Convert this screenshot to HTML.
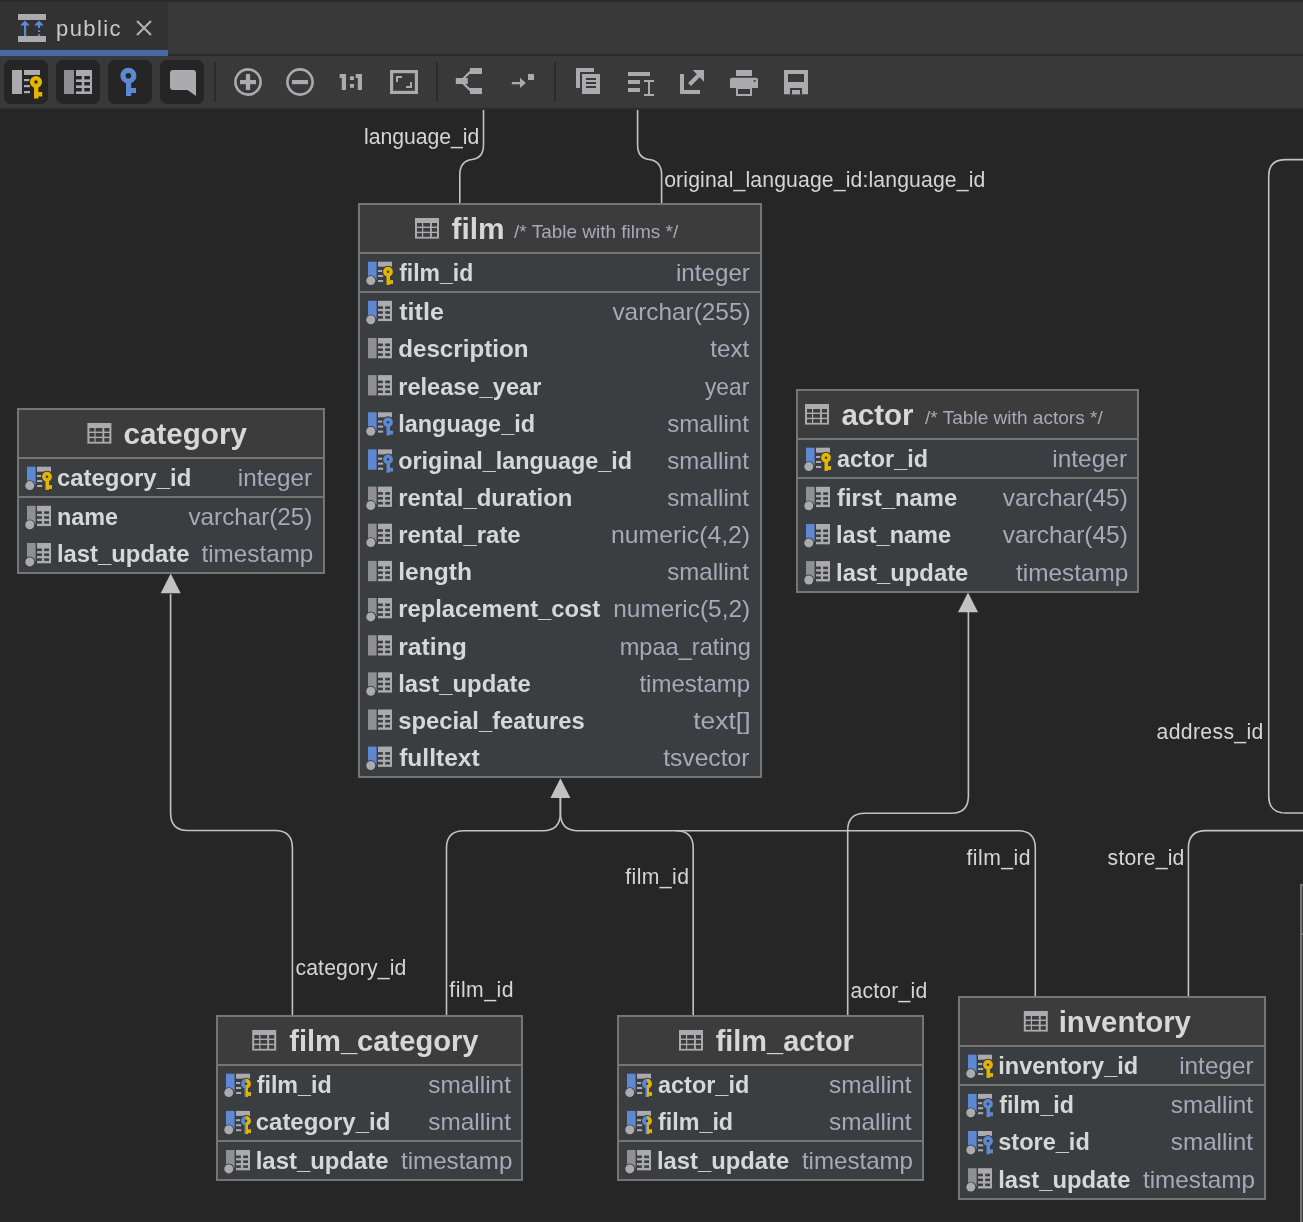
<!DOCTYPE html><html><head><meta charset="utf-8"><title>public - diagram</title><style>html,body{margin:0;padding:0;background:#262626;width:1303px;height:1222px;overflow:hidden}svg{display:block;will-change:transform;font-family:"Liberation Sans",sans-serif}</style></head><body><svg width="1303" height="1222" viewBox="0 0 1303 1222"><rect width="1303" height="1222" fill="#262626"/><g fill="none" stroke="#c2c2c2" stroke-width="1.6"><path d="M483.5,110 V145 Q483.5,158 472,159.5 Q459.8,161 459.8,175 V203"/><path d="M637.6,110 V145 Q637.6,158 649,159.5 Q661.6,161 661.6,175 V203"/><path d="M170.6,594 V813 Q170.6,830.5 188,830.5 H275 Q292.4,830.5 292.4,848 V1015"/><path d="M560.4,797 V813 Q560.4,830.7 543,830.7 H464 Q446.5,830.7 446.5,848 V1015"/><path d="M560.4,797 V813 Q560.4,830.7 578,830.7 H676 Q693.2,830.7 693.2,848 V1015"/><path d="M676,830.7 H1018 Q1035.3,830.7 1035.3,848 V996"/><path d="M968.4,611 V796 Q968.4,813.3 951,813.3 H865 Q847.7,813.3 847.7,830.5 V1015"/><path d="M1303,159.6 H1285.5 Q1268.7,159.6 1268.7,176 V796 Q1268.7,813 1286,813 H1303"/><path d="M1188.4,996 V848 Q1188.4,830.6 1206,830.6 H1303"/></g><path d="M170.7,573.5 L180.7,593.3 H160.7 Z" fill="#c2c2c2"/><path d="M560.4,778.2 L570.4,798.0 H550.4 Z" fill="#c2c2c2"/><path d="M968,592.4 L978,612.1999999999999 H958 Z" fill="#c2c2c2"/><text x="364.0" y="143.8" font-size="21.2" textLength="115.3" lengthAdjust="spacing" fill="#d5d5d5">language_id</text><text x="664.2" y="186.9" font-size="21.2" textLength="321.1" lengthAdjust="spacing" fill="#d5d5d5">original_language_id:language_id</text><text x="1156.6" y="738.9" font-size="21.2" textLength="106.7" lengthAdjust="spacing" fill="#d5d5d5">address_id</text><text x="966.5" y="865.4" font-size="21.2" textLength="64.1" lengthAdjust="spacing" fill="#d5d5d5">film_id</text><text x="1107.6" y="865.4" font-size="21.2" textLength="76.8" lengthAdjust="spacing" fill="#d5d5d5">store_id</text><text x="625.2" y="883.8" font-size="21.2" textLength="63.8" lengthAdjust="spacing" fill="#d5d5d5">film_id</text><text x="295.5" y="975.4" font-size="21.2" textLength="110.8" lengthAdjust="spacing" fill="#d5d5d5">category_id</text><text x="449.3" y="997" font-size="21.2" textLength="64.2" lengthAdjust="spacing" fill="#d5d5d5">film_id</text><text x="850.5" y="998" font-size="21.2" textLength="76.8" lengthAdjust="spacing" fill="#d5d5d5">actor_id</text><rect x="1301" y="885" width="4" height="400" fill="#3c3c3c" stroke="#757575" stroke-width="2"/><rect x="1302" y="933" width="4" height="2" fill="#757575"/><rect x="359" y="204" width="402" height="573.00" fill="#3b3e41" stroke="#757575" stroke-width="2"/><rect x="360" y="205" width="400" height="47" fill="#3c3c3c"/><rect x="360" y="252" width="400" height="2" fill="#757575"/><g transform="translate(415.0,218.0)"><rect x="0" y="0" width="24" height="20.6" fill="#abaaaf"/><rect x="2" y="5" width="5" height="3.6" fill="#3c3c3c"/><rect x="8.2" y="5" width="6.8" height="3.6" fill="#3c3c3c"/><rect x="16.9" y="5" width="5.1" height="3.6" fill="#3c3c3c"/><rect x="2" y="10" width="5" height="3.7" fill="#3c3c3c"/><rect x="8.2" y="10" width="6.8" height="3.7" fill="#3c3c3c"/><rect x="16.9" y="10" width="5.1" height="3.7" fill="#3c3c3c"/><rect x="2" y="15.1" width="5" height="3.7" fill="#3c3c3c"/><rect x="8.2" y="15.1" width="6.8" height="3.7" fill="#3c3c3c"/><rect x="16.9" y="15.1" width="5.1" height="3.7" fill="#3c3c3c"/></g><text x="451.50" y="238.6" font-size="29" font-weight="bold" fill="#d7d7d7" textLength="53.11" lengthAdjust="spacingAndGlyphs">film</text><text x="514.10" y="238.4" font-size="19" fill="#a9a8b9" textLength="164.09" lengthAdjust="spacingAndGlyphs">/* Table with films */</text><rect x="368.0" y="261.7" width="8.6" height="18.0" fill="#5d89d2"/><rect x="378.0" y="261.7" width="14" height="5" fill="#abaaaf"/><rect x="378.0" y="270.0" width="5.2" height="2" fill="#abaaaf"/><rect x="378.0" y="275.0" width="5.2" height="2" fill="#abaaaf"/><rect x="378.0" y="280.0" width="5.2" height="2" fill="#abaaaf"/><g><circle cx="388.0" cy="271.7" r="6" fill="#3b3e41"/><rect x="385.4" y="273.7" width="8" height="12" fill="#3b3e41"/><circle cx="388.0" cy="271.7" r="3.1" fill="none" stroke="#e3b500" stroke-width="3.6"/><rect x="386.5" y="274.7" width="3.5" height="10.2" fill="#e3b500"/><rect x="389.9" y="280.1" width="3.1" height="3.8" fill="#e3b500"/></g><circle cx="370.8" cy="280.6" r="5.4" fill="#3b3e41"/><circle cx="370.8" cy="280.6" r="4.5" fill="#abaaaf"/><text x="399.20" y="281.1" font-size="24.5" font-weight="bold" fill="#d7d7d7" textLength="74.01" lengthAdjust="spacingAndGlyphs">film_id</text><text x="675.99" y="281.1" font-size="24" fill="#a9a8b9" textLength="73.89" lengthAdjust="spacingAndGlyphs">integer</text><rect x="360" y="291" width="400" height="2" fill="#757575"/><rect x="368.0" y="300.8" width="8.6" height="18.0" fill="#5d89d2"/><rect x="378.0" y="300.8" width="14" height="20.3" fill="#abaaaf"/><rect x="378.0" y="306.3" width="4.9" height="2.6" fill="#3b3e41"/><rect x="385.2" y="306.3" width="4.8" height="2.6" fill="#3b3e41"/><rect x="378.0" y="311.2" width="4.9" height="2.6" fill="#3b3e41"/><rect x="385.2" y="311.2" width="4.8" height="2.6" fill="#3b3e41"/><rect x="378.0" y="316.1" width="4.9" height="2.6" fill="#3b3e41"/><rect x="385.2" y="316.1" width="4.8" height="2.6" fill="#3b3e41"/><circle cx="370.8" cy="319.8" r="5.4" fill="#3b3e41"/><circle cx="370.8" cy="319.8" r="4.5" fill="#abaaaf"/><text x="399.20" y="320.2" font-size="24.5" font-weight="bold" fill="#d7d7d7" textLength="44.68" lengthAdjust="spacingAndGlyphs">title</text><text x="612.40" y="320.2" font-size="24" fill="#a9a8b9" textLength="138.18" lengthAdjust="spacingAndGlyphs">varchar(255)</text><rect x="360" y="329.80" width="400" height="1" fill="#3d3d3e"/><rect x="368.0" y="338.0" width="8.6" height="20.3" fill="#8f8f94"/><rect x="378.0" y="338.0" width="14" height="20.3" fill="#abaaaf"/><rect x="378.0" y="343.5" width="4.9" height="2.6" fill="#3b3e41"/><rect x="385.2" y="343.5" width="4.8" height="2.6" fill="#3b3e41"/><rect x="378.0" y="348.4" width="4.9" height="2.6" fill="#3b3e41"/><rect x="385.2" y="348.4" width="4.8" height="2.6" fill="#3b3e41"/><rect x="378.0" y="353.3" width="4.9" height="2.6" fill="#3b3e41"/><rect x="385.2" y="353.3" width="4.8" height="2.6" fill="#3b3e41"/><text x="398.21" y="357.4" font-size="24.5" font-weight="bold" fill="#d7d7d7" textLength="130.22" lengthAdjust="spacingAndGlyphs">description</text><text x="710.30" y="357.4" font-size="24" fill="#a9a8b9" textLength="38.89" lengthAdjust="spacingAndGlyphs">text</text><rect x="360" y="366.95" width="400" height="1" fill="#3d3d3e"/><rect x="368.0" y="375.1" width="8.6" height="20.3" fill="#8f8f94"/><rect x="378.0" y="375.1" width="14" height="20.3" fill="#abaaaf"/><rect x="378.0" y="380.6" width="4.9" height="2.6" fill="#3b3e41"/><rect x="385.2" y="380.6" width="4.8" height="2.6" fill="#3b3e41"/><rect x="378.0" y="385.5" width="4.9" height="2.6" fill="#3b3e41"/><rect x="385.2" y="385.5" width="4.8" height="2.6" fill="#3b3e41"/><rect x="378.0" y="390.4" width="4.9" height="2.6" fill="#3b3e41"/><rect x="385.2" y="390.4" width="4.8" height="2.6" fill="#3b3e41"/><text x="398.24" y="394.5" font-size="24.5" font-weight="bold" fill="#d7d7d7" textLength="143.10" lengthAdjust="spacingAndGlyphs">release_year</text><text x="705.00" y="394.5" font-size="24" fill="#a9a8b9" textLength="44.20" lengthAdjust="spacingAndGlyphs">year</text><rect x="360" y="404.10" width="400" height="1" fill="#3d3d3e"/><rect x="368.0" y="412.3" width="8.6" height="18.0" fill="#5d89d2"/><rect x="378.0" y="412.3" width="14" height="5" fill="#abaaaf"/><rect x="378.0" y="420.6" width="5.2" height="2" fill="#abaaaf"/><rect x="378.0" y="425.6" width="5.2" height="2" fill="#abaaaf"/><rect x="378.0" y="430.6" width="5.2" height="2" fill="#abaaaf"/><g><circle cx="388.0" cy="422.3" r="6" fill="#3b3e41"/><rect x="385.4" y="424.3" width="8" height="12" fill="#3b3e41"/><circle cx="388.0" cy="422.3" r="3.1" fill="none" stroke="#5d89d2" stroke-width="3.6"/><rect x="386.5" y="425.3" width="3.5" height="10.2" fill="#5d89d2"/><rect x="389.9" y="430.7" width="3.1" height="3.8" fill="#5d89d2"/></g><circle cx="370.8" cy="431.2" r="5.4" fill="#3b3e41"/><circle cx="370.8" cy="431.2" r="4.5" fill="#abaaaf"/><text x="398.24" y="431.7" font-size="24.5" font-weight="bold" fill="#d7d7d7" textLength="136.77" lengthAdjust="spacingAndGlyphs">language_id</text><text x="667.30" y="431.7" font-size="24" fill="#a9a8b9" textLength="81.56" lengthAdjust="spacingAndGlyphs">smallint</text><rect x="360" y="441.25" width="400" height="1" fill="#3d3d3e"/><rect x="368.0" y="449.4" width="8.6" height="20.3" fill="#5d89d2"/><rect x="378.0" y="449.4" width="14" height="5" fill="#abaaaf"/><rect x="378.0" y="457.7" width="5.2" height="2" fill="#abaaaf"/><rect x="378.0" y="462.7" width="5.2" height="2" fill="#abaaaf"/><rect x="378.0" y="467.7" width="5.2" height="2" fill="#abaaaf"/><g><circle cx="388.0" cy="459.4" r="6" fill="#3b3e41"/><rect x="385.4" y="461.4" width="8" height="12" fill="#3b3e41"/><circle cx="388.0" cy="459.4" r="3.1" fill="none" stroke="#5d89d2" stroke-width="3.6"/><rect x="386.5" y="462.4" width="3.5" height="10.2" fill="#5d89d2"/><rect x="389.9" y="467.8" width="3.1" height="3.8" fill="#5d89d2"/></g><text x="398.25" y="468.8" font-size="24.5" font-weight="bold" fill="#d7d7d7" textLength="233.77" lengthAdjust="spacingAndGlyphs">original_language_id</text><text x="667.30" y="468.8" font-size="24" fill="#a9a8b9" textLength="81.56" lengthAdjust="spacingAndGlyphs">smallint</text><rect x="360" y="478.40" width="400" height="1" fill="#3d3d3e"/><rect x="368.0" y="486.6" width="8.6" height="18.0" fill="#8f8f94"/><rect x="378.0" y="486.6" width="14" height="20.3" fill="#abaaaf"/><rect x="378.0" y="492.1" width="4.9" height="2.6" fill="#3b3e41"/><rect x="385.2" y="492.1" width="4.8" height="2.6" fill="#3b3e41"/><rect x="378.0" y="497.0" width="4.9" height="2.6" fill="#3b3e41"/><rect x="385.2" y="497.0" width="4.8" height="2.6" fill="#3b3e41"/><rect x="378.0" y="501.9" width="4.9" height="2.6" fill="#3b3e41"/><rect x="385.2" y="501.9" width="4.8" height="2.6" fill="#3b3e41"/><circle cx="370.8" cy="505.5" r="5.4" fill="#3b3e41"/><circle cx="370.8" cy="505.5" r="4.5" fill="#abaaaf"/><text x="398.22" y="506.0" font-size="24.5" font-weight="bold" fill="#d7d7d7" textLength="174.19" lengthAdjust="spacingAndGlyphs">rental_duration</text><text x="667.30" y="506.0" font-size="24" fill="#a9a8b9" textLength="81.56" lengthAdjust="spacingAndGlyphs">smallint</text><rect x="360" y="515.55" width="400" height="1" fill="#3d3d3e"/><rect x="368.0" y="523.7" width="8.6" height="18.0" fill="#8f8f94"/><rect x="378.0" y="523.7" width="14" height="20.3" fill="#abaaaf"/><rect x="378.0" y="529.2" width="4.9" height="2.6" fill="#3b3e41"/><rect x="385.2" y="529.2" width="4.8" height="2.6" fill="#3b3e41"/><rect x="378.0" y="534.1" width="4.9" height="2.6" fill="#3b3e41"/><rect x="385.2" y="534.1" width="4.8" height="2.6" fill="#3b3e41"/><rect x="378.0" y="539.0" width="4.9" height="2.6" fill="#3b3e41"/><rect x="385.2" y="539.0" width="4.8" height="2.6" fill="#3b3e41"/><circle cx="370.8" cy="542.6" r="5.4" fill="#3b3e41"/><circle cx="370.8" cy="542.6" r="4.5" fill="#abaaaf"/><text x="398.22" y="543.1" font-size="24.5" font-weight="bold" fill="#d7d7d7" textLength="122.47" lengthAdjust="spacingAndGlyphs">rental_rate</text><text x="611.07" y="543.1" font-size="24" fill="#a9a8b9" textLength="139.07" lengthAdjust="spacingAndGlyphs">numeric(4,2)</text><rect x="360" y="552.70" width="400" height="1" fill="#3d3d3e"/><rect x="368.0" y="560.9" width="8.6" height="20.3" fill="#8f8f94"/><rect x="378.0" y="560.9" width="14" height="20.3" fill="#abaaaf"/><rect x="378.0" y="566.4" width="4.9" height="2.6" fill="#3b3e41"/><rect x="385.2" y="566.4" width="4.8" height="2.6" fill="#3b3e41"/><rect x="378.0" y="571.3" width="4.9" height="2.6" fill="#3b3e41"/><rect x="385.2" y="571.3" width="4.8" height="2.6" fill="#3b3e41"/><rect x="378.0" y="576.2" width="4.9" height="2.6" fill="#3b3e41"/><rect x="385.2" y="576.2" width="4.8" height="2.6" fill="#3b3e41"/><text x="398.20" y="580.3" font-size="24.5" font-weight="bold" fill="#d7d7d7" textLength="73.81" lengthAdjust="spacingAndGlyphs">length</text><text x="667.30" y="580.3" font-size="24" fill="#a9a8b9" textLength="81.56" lengthAdjust="spacingAndGlyphs">smallint</text><rect x="360" y="589.85" width="400" height="1" fill="#3d3d3e"/><rect x="368.0" y="598.0" width="8.6" height="18.0" fill="#8f8f94"/><rect x="378.0" y="598.0" width="14" height="20.3" fill="#abaaaf"/><rect x="378.0" y="603.5" width="4.9" height="2.6" fill="#3b3e41"/><rect x="385.2" y="603.5" width="4.8" height="2.6" fill="#3b3e41"/><rect x="378.0" y="608.4" width="4.9" height="2.6" fill="#3b3e41"/><rect x="385.2" y="608.4" width="4.8" height="2.6" fill="#3b3e41"/><rect x="378.0" y="613.3" width="4.9" height="2.6" fill="#3b3e41"/><rect x="385.2" y="613.3" width="4.8" height="2.6" fill="#3b3e41"/><circle cx="370.8" cy="616.9" r="5.4" fill="#3b3e41"/><circle cx="370.8" cy="616.9" r="4.5" fill="#abaaaf"/><text x="398.23" y="617.4" font-size="24.5" font-weight="bold" fill="#d7d7d7" textLength="201.95" lengthAdjust="spacingAndGlyphs">replacement_cost</text><text x="613.28" y="617.4" font-size="24" fill="#a9a8b9" textLength="136.85" lengthAdjust="spacingAndGlyphs">numeric(5,2)</text><rect x="360" y="627.00" width="400" height="1" fill="#3d3d3e"/><rect x="368.0" y="635.2" width="8.6" height="20.3" fill="#8f8f94"/><rect x="378.0" y="635.2" width="14" height="20.3" fill="#abaaaf"/><rect x="378.0" y="640.7" width="4.9" height="2.6" fill="#3b3e41"/><rect x="385.2" y="640.7" width="4.8" height="2.6" fill="#3b3e41"/><rect x="378.0" y="645.6" width="4.9" height="2.6" fill="#3b3e41"/><rect x="385.2" y="645.6" width="4.8" height="2.6" fill="#3b3e41"/><rect x="378.0" y="650.5" width="4.9" height="2.6" fill="#3b3e41"/><rect x="385.2" y="650.5" width="4.8" height="2.6" fill="#3b3e41"/><text x="398.19" y="654.6" font-size="24.5" font-weight="bold" fill="#d7d7d7" textLength="68.68" lengthAdjust="spacingAndGlyphs">rating</text><text x="619.72" y="654.6" font-size="24" fill="#a9a8b9" textLength="131.08" lengthAdjust="spacingAndGlyphs">mpaa_rating</text><rect x="360" y="664.15" width="400" height="1" fill="#3d3d3e"/><rect x="368.0" y="672.3" width="8.6" height="18.0" fill="#8f8f94"/><rect x="378.0" y="672.3" width="14" height="20.3" fill="#abaaaf"/><rect x="378.0" y="677.8" width="4.9" height="2.6" fill="#3b3e41"/><rect x="385.2" y="677.8" width="4.8" height="2.6" fill="#3b3e41"/><rect x="378.0" y="682.7" width="4.9" height="2.6" fill="#3b3e41"/><rect x="385.2" y="682.7" width="4.8" height="2.6" fill="#3b3e41"/><rect x="378.0" y="687.6" width="4.9" height="2.6" fill="#3b3e41"/><rect x="385.2" y="687.6" width="4.8" height="2.6" fill="#3b3e41"/><circle cx="370.8" cy="691.2" r="5.4" fill="#3b3e41"/><circle cx="370.8" cy="691.2" r="4.5" fill="#abaaaf"/><text x="398.23" y="691.7" font-size="24.5" font-weight="bold" fill="#d7d7d7" textLength="132.42" lengthAdjust="spacingAndGlyphs">last_update</text><text x="639.40" y="691.7" font-size="24" fill="#a9a8b9" textLength="110.70" lengthAdjust="spacingAndGlyphs">timestamp</text><rect x="360" y="701.30" width="400" height="1" fill="#3d3d3e"/><rect x="368.0" y="709.5" width="8.6" height="20.3" fill="#8f8f94"/><rect x="378.0" y="709.5" width="14" height="20.3" fill="#abaaaf"/><rect x="378.0" y="715.0" width="4.9" height="2.6" fill="#3b3e41"/><rect x="385.2" y="715.0" width="4.8" height="2.6" fill="#3b3e41"/><rect x="378.0" y="719.9" width="4.9" height="2.6" fill="#3b3e41"/><rect x="385.2" y="719.9" width="4.8" height="2.6" fill="#3b3e41"/><rect x="378.0" y="724.8" width="4.9" height="2.6" fill="#3b3e41"/><rect x="385.2" y="724.8" width="4.8" height="2.6" fill="#3b3e41"/><text x="398.23" y="728.9" font-size="24.5" font-weight="bold" fill="#d7d7d7" textLength="186.60" lengthAdjust="spacingAndGlyphs">special_features</text><text x="693.20" y="728.9" font-size="24" fill="#a9a8b9" textLength="57.34" lengthAdjust="spacingAndGlyphs">text[]</text><rect x="360" y="738.45" width="400" height="1" fill="#3d3d3e"/><rect x="368.0" y="746.6" width="8.6" height="18.0" fill="#5d89d2"/><rect x="378.0" y="746.6" width="14" height="20.3" fill="#abaaaf"/><rect x="378.0" y="752.1" width="4.9" height="2.6" fill="#3b3e41"/><rect x="385.2" y="752.1" width="4.8" height="2.6" fill="#3b3e41"/><rect x="378.0" y="757.0" width="4.9" height="2.6" fill="#3b3e41"/><rect x="385.2" y="757.0" width="4.8" height="2.6" fill="#3b3e41"/><rect x="378.0" y="761.9" width="4.9" height="2.6" fill="#3b3e41"/><rect x="385.2" y="761.9" width="4.8" height="2.6" fill="#3b3e41"/><circle cx="370.8" cy="765.5" r="5.4" fill="#3b3e41"/><circle cx="370.8" cy="765.5" r="4.5" fill="#abaaaf"/><text x="399.20" y="766.0" font-size="24.5" font-weight="bold" fill="#d7d7d7" textLength="80.41" lengthAdjust="spacingAndGlyphs">fulltext</text><text x="663.20" y="766.0" font-size="24" fill="#a9a8b9" textLength="86.23" lengthAdjust="spacingAndGlyphs">tsvector</text><rect x="18" y="409" width="306" height="164.00" fill="#3b3e41" stroke="#757575" stroke-width="2"/><rect x="19" y="410" width="304" height="47" fill="#3c3c3c"/><rect x="19" y="457" width="304" height="2" fill="#757575"/><g transform="translate(87.4,423.0)"><rect x="0" y="0" width="24" height="20.6" fill="#abaaaf"/><rect x="2" y="5" width="5" height="3.6" fill="#3c3c3c"/><rect x="8.2" y="5" width="6.8" height="3.6" fill="#3c3c3c"/><rect x="16.9" y="5" width="5.1" height="3.6" fill="#3c3c3c"/><rect x="2" y="10" width="5" height="3.7" fill="#3c3c3c"/><rect x="8.2" y="10" width="6.8" height="3.7" fill="#3c3c3c"/><rect x="16.9" y="10" width="5.1" height="3.7" fill="#3c3c3c"/><rect x="2" y="15.1" width="5" height="3.7" fill="#3c3c3c"/><rect x="8.2" y="15.1" width="6.8" height="3.7" fill="#3c3c3c"/><rect x="16.9" y="15.1" width="5.1" height="3.7" fill="#3c3c3c"/></g><text x="123.48" y="443.6" font-size="29" font-weight="bold" fill="#d7d7d7" textLength="123.41" lengthAdjust="spacingAndGlyphs">category</text><rect x="27.0" y="466.7" width="8.6" height="18.0" fill="#5d89d2"/><rect x="37.0" y="466.7" width="14" height="5" fill="#abaaaf"/><rect x="37.0" y="475.0" width="5.2" height="2" fill="#abaaaf"/><rect x="37.0" y="480.0" width="5.2" height="2" fill="#abaaaf"/><rect x="37.0" y="485.0" width="5.2" height="2" fill="#abaaaf"/><g><circle cx="47.0" cy="476.7" r="6" fill="#3b3e41"/><rect x="44.4" y="478.7" width="8" height="12" fill="#3b3e41"/><circle cx="47.0" cy="476.7" r="3.1" fill="none" stroke="#e3b500" stroke-width="3.6"/><rect x="45.5" y="479.7" width="3.5" height="10.2" fill="#e3b500"/><rect x="48.9" y="485.1" width="3.1" height="3.8" fill="#e3b500"/></g><circle cx="29.8" cy="485.6" r="5.4" fill="#3b3e41"/><circle cx="29.8" cy="485.6" r="4.5" fill="#abaaaf"/><text x="56.92" y="486.1" font-size="24.5" font-weight="bold" fill="#d7d7d7" textLength="134.37" lengthAdjust="spacingAndGlyphs">category_id</text><text x="237.89" y="486.1" font-size="24" fill="#a9a8b9" textLength="74.09" lengthAdjust="spacingAndGlyphs">integer</text><rect x="19" y="496" width="304" height="2" fill="#757575"/><rect x="27.0" y="505.8" width="8.6" height="18.0" fill="#8f8f94"/><rect x="37.0" y="505.8" width="14" height="20.3" fill="#abaaaf"/><rect x="37.0" y="511.3" width="4.9" height="2.6" fill="#3b3e41"/><rect x="44.2" y="511.3" width="4.8" height="2.6" fill="#3b3e41"/><rect x="37.0" y="516.2" width="4.9" height="2.6" fill="#3b3e41"/><rect x="44.2" y="516.2" width="4.8" height="2.6" fill="#3b3e41"/><rect x="37.0" y="521.1" width="4.9" height="2.6" fill="#3b3e41"/><rect x="44.2" y="521.1" width="4.8" height="2.6" fill="#3b3e41"/><circle cx="29.8" cy="524.8" r="5.4" fill="#3b3e41"/><circle cx="29.8" cy="524.8" r="4.5" fill="#abaaaf"/><text x="56.95" y="525.2" font-size="24.5" font-weight="bold" fill="#d7d7d7" textLength="61.07" lengthAdjust="spacingAndGlyphs">name</text><text x="188.50" y="525.2" font-size="24" fill="#a9a8b9" textLength="123.83" lengthAdjust="spacingAndGlyphs">varchar(25)</text><rect x="19" y="534.80" width="304" height="1" fill="#3d3d3e"/><rect x="27.0" y="543.0" width="8.6" height="18.0" fill="#8f8f94"/><rect x="37.0" y="543.0" width="14" height="20.3" fill="#abaaaf"/><rect x="37.0" y="548.5" width="4.9" height="2.6" fill="#3b3e41"/><rect x="44.2" y="548.5" width="4.8" height="2.6" fill="#3b3e41"/><rect x="37.0" y="553.4" width="4.9" height="2.6" fill="#3b3e41"/><rect x="44.2" y="553.4" width="4.8" height="2.6" fill="#3b3e41"/><rect x="37.0" y="558.3" width="4.9" height="2.6" fill="#3b3e41"/><rect x="44.2" y="558.3" width="4.8" height="2.6" fill="#3b3e41"/><circle cx="29.8" cy="561.9" r="5.4" fill="#3b3e41"/><circle cx="29.8" cy="561.9" r="4.5" fill="#abaaaf"/><text x="56.93" y="562.4" font-size="24.5" font-weight="bold" fill="#d7d7d7" textLength="132.53" lengthAdjust="spacingAndGlyphs">last_update</text><text x="201.50" y="562.4" font-size="24" fill="#a9a8b9" textLength="111.81" lengthAdjust="spacingAndGlyphs">timestamp</text><rect x="797" y="390" width="341" height="202.00" fill="#3b3e41" stroke="#757575" stroke-width="2"/><rect x="798" y="391" width="339" height="47" fill="#3c3c3c"/><rect x="798" y="438" width="339" height="2" fill="#757575"/><g transform="translate(805.0,404.0)"><rect x="0" y="0" width="24" height="20.6" fill="#abaaaf"/><rect x="2" y="5" width="5" height="3.6" fill="#3c3c3c"/><rect x="8.2" y="5" width="6.8" height="3.6" fill="#3c3c3c"/><rect x="16.9" y="5" width="5.1" height="3.6" fill="#3c3c3c"/><rect x="2" y="10" width="5" height="3.7" fill="#3c3c3c"/><rect x="8.2" y="10" width="6.8" height="3.7" fill="#3c3c3c"/><rect x="16.9" y="10" width="5.1" height="3.7" fill="#3c3c3c"/><rect x="2" y="15.1" width="5" height="3.7" fill="#3c3c3c"/><rect x="8.2" y="15.1" width="6.8" height="3.7" fill="#3c3c3c"/><rect x="16.9" y="15.1" width="5.1" height="3.7" fill="#3c3c3c"/></g><text x="841.48" y="424.6" font-size="29" font-weight="bold" fill="#d7d7d7" textLength="72.14" lengthAdjust="spacingAndGlyphs">actor</text><text x="925.00" y="424.4" font-size="19" fill="#a9a8b9" textLength="177.78" lengthAdjust="spacingAndGlyphs">/* Table with actors */</text><rect x="806.0" y="447.7" width="8.6" height="18.0" fill="#5d89d2"/><rect x="816.0" y="447.7" width="14" height="5" fill="#abaaaf"/><rect x="816.0" y="456.0" width="5.2" height="2" fill="#abaaaf"/><rect x="816.0" y="461.0" width="5.2" height="2" fill="#abaaaf"/><rect x="816.0" y="466.0" width="5.2" height="2" fill="#abaaaf"/><g><circle cx="826.0" cy="457.7" r="6" fill="#3b3e41"/><rect x="823.4" y="459.7" width="8" height="12" fill="#3b3e41"/><circle cx="826.0" cy="457.7" r="3.1" fill="none" stroke="#e3b500" stroke-width="3.6"/><rect x="824.5" y="460.7" width="3.5" height="10.2" fill="#e3b500"/><rect x="827.9" y="466.1" width="3.1" height="3.8" fill="#e3b500"/></g><circle cx="808.8" cy="466.6" r="5.4" fill="#3b3e41"/><circle cx="808.8" cy="466.6" r="4.5" fill="#abaaaf"/><text x="837.00" y="467.1" font-size="24.5" font-weight="bold" fill="#d7d7d7" textLength="91.05" lengthAdjust="spacingAndGlyphs">actor_id</text><text x="1052.28" y="467.1" font-size="24" fill="#a9a8b9" textLength="74.80" lengthAdjust="spacingAndGlyphs">integer</text><rect x="798" y="477" width="339" height="2" fill="#757575"/><rect x="806.0" y="486.8" width="8.6" height="18.0" fill="#8f8f94"/><rect x="816.0" y="486.8" width="14" height="20.3" fill="#abaaaf"/><rect x="816.0" y="492.3" width="4.9" height="2.6" fill="#3b3e41"/><rect x="823.2" y="492.3" width="4.8" height="2.6" fill="#3b3e41"/><rect x="816.0" y="497.2" width="4.9" height="2.6" fill="#3b3e41"/><rect x="823.2" y="497.2" width="4.8" height="2.6" fill="#3b3e41"/><rect x="816.0" y="502.1" width="4.9" height="2.6" fill="#3b3e41"/><rect x="823.2" y="502.1" width="4.8" height="2.6" fill="#3b3e41"/><circle cx="808.8" cy="505.8" r="5.4" fill="#3b3e41"/><circle cx="808.8" cy="505.8" r="4.5" fill="#abaaaf"/><text x="837.00" y="506.2" font-size="24.5" font-weight="bold" fill="#d7d7d7" textLength="120.19" lengthAdjust="spacingAndGlyphs">first_name</text><text x="1002.80" y="506.2" font-size="24" fill="#a9a8b9" textLength="125.03" lengthAdjust="spacingAndGlyphs">varchar(45)</text><rect x="798" y="515.80" width="339" height="1" fill="#3d3d3e"/><rect x="806.0" y="524.0" width="8.6" height="18.0" fill="#5d89d2"/><rect x="816.0" y="524.0" width="14" height="20.3" fill="#abaaaf"/><rect x="816.0" y="529.5" width="4.9" height="2.6" fill="#3b3e41"/><rect x="823.2" y="529.5" width="4.8" height="2.6" fill="#3b3e41"/><rect x="816.0" y="534.4" width="4.9" height="2.6" fill="#3b3e41"/><rect x="823.2" y="534.4" width="4.8" height="2.6" fill="#3b3e41"/><rect x="816.0" y="539.3" width="4.9" height="2.6" fill="#3b3e41"/><rect x="823.2" y="539.3" width="4.8" height="2.6" fill="#3b3e41"/><circle cx="808.8" cy="542.9" r="5.4" fill="#3b3e41"/><circle cx="808.8" cy="542.9" r="4.5" fill="#abaaaf"/><text x="836.04" y="543.4" font-size="24.5" font-weight="bold" fill="#d7d7d7" textLength="115.09" lengthAdjust="spacingAndGlyphs">last_name</text><text x="1002.80" y="543.4" font-size="24" fill="#a9a8b9" textLength="125.03" lengthAdjust="spacingAndGlyphs">varchar(45)</text><rect x="798" y="552.95" width="339" height="1" fill="#3d3d3e"/><rect x="806.0" y="561.1" width="8.6" height="18.0" fill="#8f8f94"/><rect x="816.0" y="561.1" width="14" height="20.3" fill="#abaaaf"/><rect x="816.0" y="566.6" width="4.9" height="2.6" fill="#3b3e41"/><rect x="823.2" y="566.6" width="4.8" height="2.6" fill="#3b3e41"/><rect x="816.0" y="571.5" width="4.9" height="2.6" fill="#3b3e41"/><rect x="823.2" y="571.5" width="4.8" height="2.6" fill="#3b3e41"/><rect x="816.0" y="576.4" width="4.9" height="2.6" fill="#3b3e41"/><rect x="823.2" y="576.4" width="4.8" height="2.6" fill="#3b3e41"/><circle cx="808.8" cy="580.0" r="5.4" fill="#3b3e41"/><circle cx="808.8" cy="580.0" r="4.5" fill="#abaaaf"/><text x="836.03" y="580.5" font-size="24.5" font-weight="bold" fill="#d7d7d7" textLength="132.32" lengthAdjust="spacingAndGlyphs">last_update</text><text x="1016.00" y="580.5" font-size="24" fill="#a9a8b9" textLength="112.41" lengthAdjust="spacingAndGlyphs">timestamp</text><rect x="217" y="1016" width="305" height="164.00" fill="#3b3e41" stroke="#757575" stroke-width="2"/><rect x="218" y="1017" width="303" height="47" fill="#3c3c3c"/><rect x="218" y="1064" width="303" height="2" fill="#757575"/><g transform="translate(252.2,1030.0)"><rect x="0" y="0" width="24" height="20.6" fill="#abaaaf"/><rect x="2" y="5" width="5" height="3.6" fill="#3c3c3c"/><rect x="8.2" y="5" width="6.8" height="3.6" fill="#3c3c3c"/><rect x="16.9" y="5" width="5.1" height="3.6" fill="#3c3c3c"/><rect x="2" y="10" width="5" height="3.7" fill="#3c3c3c"/><rect x="8.2" y="10" width="6.8" height="3.7" fill="#3c3c3c"/><rect x="16.9" y="10" width="5.1" height="3.7" fill="#3c3c3c"/><rect x="2" y="15.1" width="5" height="3.7" fill="#3c3c3c"/><rect x="8.2" y="15.1" width="6.8" height="3.7" fill="#3c3c3c"/><rect x="16.9" y="15.1" width="5.1" height="3.7" fill="#3c3c3c"/></g><text x="289.20" y="1050.6" font-size="29" font-weight="bold" fill="#d7d7d7" textLength="189.28" lengthAdjust="spacingAndGlyphs">film_category</text><rect x="226.0" y="1073.7" width="8.6" height="18.0" fill="#5d89d2"/><rect x="236.0" y="1073.7" width="14" height="5" fill="#abaaaf"/><rect x="236.0" y="1082.0" width="5.2" height="2" fill="#abaaaf"/><rect x="236.0" y="1087.0" width="5.2" height="2" fill="#abaaaf"/><rect x="236.0" y="1092.0" width="5.2" height="2" fill="#abaaaf"/><g><clipPath id="cl216_1066"><rect x="238" y="1075.7" width="8" height="24"/></clipPath><clipPath id="cr216_1066"><rect x="246" y="1075.7" width="8" height="24"/></clipPath></g><g clip-path="url(#cl216_1066)"><circle cx="246.0" cy="1083.7" r="6" fill="#3b3e41"/><rect x="243.4" y="1085.7" width="8" height="12" fill="#3b3e41"/><circle cx="246.0" cy="1083.7" r="3.1" fill="none" stroke="#5d89d2" stroke-width="3.6"/><rect x="244.5" y="1086.7" width="3.5" height="10.2" fill="#5d89d2"/><rect x="247.9" y="1092.1" width="3.1" height="3.8" fill="#5d89d2"/></g><g clip-path="url(#cr216_1066)"><circle cx="246.0" cy="1083.7" r="6" fill="#3b3e41"/><rect x="243.4" y="1085.7" width="8" height="12" fill="#3b3e41"/><circle cx="246.0" cy="1083.7" r="3.1" fill="none" stroke="#e3b500" stroke-width="3.6"/><rect x="244.5" y="1086.7" width="3.5" height="10.2" fill="#e3b500"/><rect x="247.9" y="1092.1" width="3.1" height="3.8" fill="#e3b500"/></g><circle cx="228.8" cy="1092.6" r="5.4" fill="#3b3e41"/><circle cx="228.8" cy="1092.6" r="4.5" fill="#abaaaf"/><text x="256.70" y="1093.1" font-size="24.5" font-weight="bold" fill="#d7d7d7" textLength="75.02" lengthAdjust="spacingAndGlyphs">film_id</text><text x="428.28" y="1093.1" font-size="24" fill="#a9a8b9" textLength="82.67" lengthAdjust="spacingAndGlyphs">smallint</text><rect x="218" y="1102.65" width="303" height="1" fill="#3d3d3e"/><rect x="226.0" y="1110.9" width="8.6" height="18.0" fill="#5d89d2"/><rect x="236.0" y="1110.9" width="14" height="5" fill="#abaaaf"/><rect x="236.0" y="1119.2" width="5.2" height="2" fill="#abaaaf"/><rect x="236.0" y="1124.2" width="5.2" height="2" fill="#abaaaf"/><rect x="236.0" y="1129.2" width="5.2" height="2" fill="#abaaaf"/><g><clipPath id="cl216_1103"><rect x="238" y="1112.8500000000001" width="8" height="24"/></clipPath><clipPath id="cr216_1103"><rect x="246" y="1112.8500000000001" width="8" height="24"/></clipPath></g><g clip-path="url(#cl216_1103)"><circle cx="246.0" cy="1120.9" r="6" fill="#3b3e41"/><rect x="243.4" y="1122.9" width="8" height="12" fill="#3b3e41"/><circle cx="246.0" cy="1120.9" r="3.1" fill="none" stroke="#5d89d2" stroke-width="3.6"/><rect x="244.5" y="1123.9" width="3.5" height="10.2" fill="#5d89d2"/><rect x="247.9" y="1129.3" width="3.1" height="3.8" fill="#5d89d2"/></g><g clip-path="url(#cr216_1103)"><circle cx="246.0" cy="1120.9" r="6" fill="#3b3e41"/><rect x="243.4" y="1122.9" width="8" height="12" fill="#3b3e41"/><circle cx="246.0" cy="1120.9" r="3.1" fill="none" stroke="#e3b500" stroke-width="3.6"/><rect x="244.5" y="1123.9" width="3.5" height="10.2" fill="#e3b500"/><rect x="247.9" y="1129.3" width="3.1" height="3.8" fill="#e3b500"/></g><circle cx="228.8" cy="1129.8" r="5.4" fill="#3b3e41"/><circle cx="228.8" cy="1129.8" r="4.5" fill="#abaaaf"/><text x="255.72" y="1130.2" font-size="24.5" font-weight="bold" fill="#d7d7d7" textLength="134.58" lengthAdjust="spacingAndGlyphs">category_id</text><text x="428.28" y="1130.2" font-size="24" fill="#a9a8b9" textLength="82.67" lengthAdjust="spacingAndGlyphs">smallint</text><rect x="218" y="1140" width="303" height="2" fill="#757575"/><rect x="226.0" y="1150.0" width="8.6" height="18.0" fill="#8f8f94"/><rect x="236.0" y="1150.0" width="14" height="20.3" fill="#abaaaf"/><rect x="236.0" y="1155.5" width="4.9" height="2.6" fill="#3b3e41"/><rect x="243.2" y="1155.5" width="4.8" height="2.6" fill="#3b3e41"/><rect x="236.0" y="1160.4" width="4.9" height="2.6" fill="#3b3e41"/><rect x="243.2" y="1160.4" width="4.8" height="2.6" fill="#3b3e41"/><rect x="236.0" y="1165.3" width="4.9" height="2.6" fill="#3b3e41"/><rect x="243.2" y="1165.3" width="4.8" height="2.6" fill="#3b3e41"/><circle cx="228.8" cy="1168.9" r="5.4" fill="#3b3e41"/><circle cx="228.8" cy="1168.9" r="4.5" fill="#abaaaf"/><text x="255.72" y="1169.4" font-size="24.5" font-weight="bold" fill="#d7d7d7" textLength="132.93" lengthAdjust="spacingAndGlyphs">last_update</text><text x="401.00" y="1169.4" font-size="24" fill="#a9a8b9" textLength="111.31" lengthAdjust="spacingAndGlyphs">timestamp</text><rect x="618" y="1016" width="305" height="164.00" fill="#3b3e41" stroke="#757575" stroke-width="2"/><rect x="619" y="1017" width="303" height="47" fill="#3c3c3c"/><rect x="619" y="1064" width="303" height="2" fill="#757575"/><g transform="translate(679.0,1030.0)"><rect x="0" y="0" width="24" height="20.6" fill="#abaaaf"/><rect x="2" y="5" width="5" height="3.6" fill="#3c3c3c"/><rect x="8.2" y="5" width="6.8" height="3.6" fill="#3c3c3c"/><rect x="16.9" y="5" width="5.1" height="3.6" fill="#3c3c3c"/><rect x="2" y="10" width="5" height="3.7" fill="#3c3c3c"/><rect x="8.2" y="10" width="6.8" height="3.7" fill="#3c3c3c"/><rect x="16.9" y="10" width="5.1" height="3.7" fill="#3c3c3c"/><rect x="2" y="15.1" width="5" height="3.7" fill="#3c3c3c"/><rect x="8.2" y="15.1" width="6.8" height="3.7" fill="#3c3c3c"/><rect x="16.9" y="15.1" width="5.1" height="3.7" fill="#3c3c3c"/></g><text x="715.70" y="1050.6" font-size="29" font-weight="bold" fill="#d7d7d7" textLength="138.11" lengthAdjust="spacingAndGlyphs">film_actor</text><rect x="627.0" y="1073.7" width="8.6" height="18.0" fill="#5d89d2"/><rect x="637.0" y="1073.7" width="14" height="5" fill="#abaaaf"/><rect x="637.0" y="1082.0" width="5.2" height="2" fill="#abaaaf"/><rect x="637.0" y="1087.0" width="5.2" height="2" fill="#abaaaf"/><rect x="637.0" y="1092.0" width="5.2" height="2" fill="#abaaaf"/><g><clipPath id="cl617_1066"><rect x="639" y="1075.7" width="8" height="24"/></clipPath><clipPath id="cr617_1066"><rect x="647" y="1075.7" width="8" height="24"/></clipPath></g><g clip-path="url(#cl617_1066)"><circle cx="647.0" cy="1083.7" r="6" fill="#3b3e41"/><rect x="644.4" y="1085.7" width="8" height="12" fill="#3b3e41"/><circle cx="647.0" cy="1083.7" r="3.1" fill="none" stroke="#5d89d2" stroke-width="3.6"/><rect x="645.5" y="1086.7" width="3.5" height="10.2" fill="#5d89d2"/><rect x="648.9" y="1092.1" width="3.1" height="3.8" fill="#5d89d2"/></g><g clip-path="url(#cr617_1066)"><circle cx="647.0" cy="1083.7" r="6" fill="#3b3e41"/><rect x="644.4" y="1085.7" width="8" height="12" fill="#3b3e41"/><circle cx="647.0" cy="1083.7" r="3.1" fill="none" stroke="#e3b500" stroke-width="3.6"/><rect x="645.5" y="1086.7" width="3.5" height="10.2" fill="#e3b500"/><rect x="648.9" y="1092.1" width="3.1" height="3.8" fill="#e3b500"/></g><circle cx="629.8" cy="1092.6" r="5.4" fill="#3b3e41"/><circle cx="629.8" cy="1092.6" r="4.5" fill="#abaaaf"/><text x="658.00" y="1093.1" font-size="24.5" font-weight="bold" fill="#d7d7d7" textLength="91.26" lengthAdjust="spacingAndGlyphs">actor_id</text><text x="829.09" y="1093.1" font-size="24" fill="#a9a8b9" textLength="82.56" lengthAdjust="spacingAndGlyphs">smallint</text><rect x="619" y="1102.65" width="303" height="1" fill="#3d3d3e"/><rect x="627.0" y="1110.9" width="8.6" height="18.0" fill="#5d89d2"/><rect x="637.0" y="1110.9" width="14" height="5" fill="#abaaaf"/><rect x="637.0" y="1119.2" width="5.2" height="2" fill="#abaaaf"/><rect x="637.0" y="1124.2" width="5.2" height="2" fill="#abaaaf"/><rect x="637.0" y="1129.2" width="5.2" height="2" fill="#abaaaf"/><g><clipPath id="cl617_1103"><rect x="639" y="1112.8500000000001" width="8" height="24"/></clipPath><clipPath id="cr617_1103"><rect x="647" y="1112.8500000000001" width="8" height="24"/></clipPath></g><g clip-path="url(#cl617_1103)"><circle cx="647.0" cy="1120.9" r="6" fill="#3b3e41"/><rect x="644.4" y="1122.9" width="8" height="12" fill="#3b3e41"/><circle cx="647.0" cy="1120.9" r="3.1" fill="none" stroke="#5d89d2" stroke-width="3.6"/><rect x="645.5" y="1123.9" width="3.5" height="10.2" fill="#5d89d2"/><rect x="648.9" y="1129.3" width="3.1" height="3.8" fill="#5d89d2"/></g><g clip-path="url(#cr617_1103)"><circle cx="647.0" cy="1120.9" r="6" fill="#3b3e41"/><rect x="644.4" y="1122.9" width="8" height="12" fill="#3b3e41"/><circle cx="647.0" cy="1120.9" r="3.1" fill="none" stroke="#e3b500" stroke-width="3.6"/><rect x="645.5" y="1123.9" width="3.5" height="10.2" fill="#e3b500"/><rect x="648.9" y="1129.3" width="3.1" height="3.8" fill="#e3b500"/></g><circle cx="629.8" cy="1129.8" r="5.4" fill="#3b3e41"/><circle cx="629.8" cy="1129.8" r="4.5" fill="#abaaaf"/><text x="658.00" y="1130.2" font-size="24.5" font-weight="bold" fill="#d7d7d7" textLength="75.12" lengthAdjust="spacingAndGlyphs">film_id</text><text x="829.09" y="1130.2" font-size="24" fill="#a9a8b9" textLength="82.56" lengthAdjust="spacingAndGlyphs">smallint</text><rect x="619" y="1140" width="303" height="2" fill="#757575"/><rect x="627.0" y="1150.0" width="8.6" height="18.0" fill="#8f8f94"/><rect x="637.0" y="1150.0" width="14" height="20.3" fill="#abaaaf"/><rect x="637.0" y="1155.5" width="4.9" height="2.6" fill="#3b3e41"/><rect x="644.2" y="1155.5" width="4.8" height="2.6" fill="#3b3e41"/><rect x="637.0" y="1160.4" width="4.9" height="2.6" fill="#3b3e41"/><rect x="644.2" y="1160.4" width="4.8" height="2.6" fill="#3b3e41"/><rect x="637.0" y="1165.3" width="4.9" height="2.6" fill="#3b3e41"/><rect x="644.2" y="1165.3" width="4.8" height="2.6" fill="#3b3e41"/><circle cx="629.8" cy="1168.9" r="5.4" fill="#3b3e41"/><circle cx="629.8" cy="1168.9" r="4.5" fill="#abaaaf"/><text x="657.03" y="1169.4" font-size="24.5" font-weight="bold" fill="#d7d7d7" textLength="132.12" lengthAdjust="spacingAndGlyphs">last_update</text><text x="801.90" y="1169.4" font-size="24" fill="#a9a8b9" textLength="111.11" lengthAdjust="spacingAndGlyphs">timestamp</text><rect x="959" y="997" width="306" height="202.00" fill="#3b3e41" stroke="#757575" stroke-width="2"/><rect x="960" y="998" width="304" height="47" fill="#3c3c3c"/><rect x="960" y="1045" width="304" height="2" fill="#757575"/><g transform="translate(1023.8,1011.0)"><rect x="0" y="0" width="24" height="20.6" fill="#abaaaf"/><rect x="2" y="5" width="5" height="3.6" fill="#3c3c3c"/><rect x="8.2" y="5" width="6.8" height="3.6" fill="#3c3c3c"/><rect x="16.9" y="5" width="5.1" height="3.6" fill="#3c3c3c"/><rect x="2" y="10" width="5" height="3.7" fill="#3c3c3c"/><rect x="8.2" y="10" width="6.8" height="3.7" fill="#3c3c3c"/><rect x="16.9" y="10" width="5.1" height="3.7" fill="#3c3c3c"/><rect x="2" y="15.1" width="5" height="3.7" fill="#3c3c3c"/><rect x="8.2" y="15.1" width="6.8" height="3.7" fill="#3c3c3c"/><rect x="16.9" y="15.1" width="5.1" height="3.7" fill="#3c3c3c"/></g><text x="1058.67" y="1031.6" font-size="29" font-weight="bold" fill="#d7d7d7" textLength="132.25" lengthAdjust="spacingAndGlyphs">inventory</text><rect x="968.0" y="1054.7" width="8.6" height="18.0" fill="#5d89d2"/><rect x="978.0" y="1054.7" width="14" height="5" fill="#abaaaf"/><rect x="978.0" y="1063.0" width="5.2" height="2" fill="#abaaaf"/><rect x="978.0" y="1068.0" width="5.2" height="2" fill="#abaaaf"/><rect x="978.0" y="1073.0" width="5.2" height="2" fill="#abaaaf"/><g><circle cx="988.0" cy="1064.7" r="6" fill="#3b3e41"/><rect x="985.4" y="1066.7" width="8" height="12" fill="#3b3e41"/><circle cx="988.0" cy="1064.7" r="3.1" fill="none" stroke="#e3b500" stroke-width="3.6"/><rect x="986.5" y="1067.7" width="3.5" height="10.2" fill="#e3b500"/><rect x="989.9" y="1073.1" width="3.1" height="3.8" fill="#e3b500"/></g><circle cx="970.8" cy="1073.6" r="5.4" fill="#3b3e41"/><circle cx="970.8" cy="1073.6" r="4.5" fill="#abaaaf"/><text x="998.24" y="1074.1" font-size="24.5" font-weight="bold" fill="#d7d7d7" textLength="140.02" lengthAdjust="spacingAndGlyphs">inventory_id</text><text x="1179.19" y="1074.1" font-size="24" fill="#a9a8b9" textLength="74.40" lengthAdjust="spacingAndGlyphs">integer</text><rect x="960" y="1084" width="304" height="2" fill="#757575"/><rect x="968.0" y="1093.9" width="8.6" height="18.0" fill="#5d89d2"/><rect x="978.0" y="1093.9" width="14" height="5" fill="#abaaaf"/><rect x="978.0" y="1102.2" width="5.2" height="2" fill="#abaaaf"/><rect x="978.0" y="1107.2" width="5.2" height="2" fill="#abaaaf"/><rect x="978.0" y="1112.2" width="5.2" height="2" fill="#abaaaf"/><g><circle cx="988.0" cy="1103.9" r="6" fill="#3b3e41"/><rect x="985.4" y="1105.9" width="8" height="12" fill="#3b3e41"/><circle cx="988.0" cy="1103.9" r="3.1" fill="none" stroke="#5d89d2" stroke-width="3.6"/><rect x="986.5" y="1106.9" width="3.5" height="10.2" fill="#5d89d2"/><rect x="989.9" y="1112.3" width="3.1" height="3.8" fill="#5d89d2"/></g><circle cx="970.8" cy="1112.8" r="5.4" fill="#3b3e41"/><circle cx="970.8" cy="1112.8" r="4.5" fill="#abaaaf"/><text x="999.20" y="1113.2" font-size="24.5" font-weight="bold" fill="#d7d7d7" textLength="74.72" lengthAdjust="spacingAndGlyphs">film_id</text><text x="1170.79" y="1113.2" font-size="24" fill="#a9a8b9" textLength="82.26" lengthAdjust="spacingAndGlyphs">smallint</text><rect x="960" y="1122.80" width="304" height="1" fill="#3d3d3e"/><rect x="968.0" y="1131.0" width="8.6" height="18.0" fill="#5d89d2"/><rect x="978.0" y="1131.0" width="14" height="5" fill="#abaaaf"/><rect x="978.0" y="1139.3" width="5.2" height="2" fill="#abaaaf"/><rect x="978.0" y="1144.3" width="5.2" height="2" fill="#abaaaf"/><rect x="978.0" y="1149.3" width="5.2" height="2" fill="#abaaaf"/><g><circle cx="988.0" cy="1141.0" r="6" fill="#3b3e41"/><rect x="985.4" y="1143.0" width="8" height="12" fill="#3b3e41"/><circle cx="988.0" cy="1141.0" r="3.1" fill="none" stroke="#5d89d2" stroke-width="3.6"/><rect x="986.5" y="1144.0" width="3.5" height="10.2" fill="#5d89d2"/><rect x="989.9" y="1149.4" width="3.1" height="3.8" fill="#5d89d2"/></g><circle cx="970.8" cy="1149.9" r="5.4" fill="#3b3e41"/><circle cx="970.8" cy="1149.9" r="4.5" fill="#abaaaf"/><text x="998.24" y="1150.4" font-size="24.5" font-weight="bold" fill="#d7d7d7" textLength="91.52" lengthAdjust="spacingAndGlyphs">store_id</text><text x="1170.79" y="1150.4" font-size="24" fill="#a9a8b9" textLength="82.26" lengthAdjust="spacingAndGlyphs">smallint</text><rect x="960" y="1159.95" width="304" height="1" fill="#3d3d3e"/><rect x="968.0" y="1168.2" width="8.6" height="18.0" fill="#8f8f94"/><rect x="978.0" y="1168.2" width="14" height="20.3" fill="#abaaaf"/><rect x="978.0" y="1173.7" width="4.9" height="2.6" fill="#3b3e41"/><rect x="985.2" y="1173.7" width="4.8" height="2.6" fill="#3b3e41"/><rect x="978.0" y="1178.6" width="4.9" height="2.6" fill="#3b3e41"/><rect x="985.2" y="1178.6" width="4.8" height="2.6" fill="#3b3e41"/><rect x="978.0" y="1183.5" width="4.9" height="2.6" fill="#3b3e41"/><rect x="985.2" y="1183.5" width="4.8" height="2.6" fill="#3b3e41"/><circle cx="970.8" cy="1187.1" r="5.4" fill="#3b3e41"/><circle cx="970.8" cy="1187.1" r="4.5" fill="#abaaaf"/><text x="998.23" y="1187.6" font-size="24.5" font-weight="bold" fill="#d7d7d7" textLength="132.32" lengthAdjust="spacingAndGlyphs">last_update</text><text x="1142.90" y="1187.6" font-size="24" fill="#a9a8b9" textLength="112.01" lengthAdjust="spacingAndGlyphs">timestamp</text><rect x="0" y="0" width="1303" height="2" fill="#2b2b2b"/><rect x="0" y="2" width="168" height="48" fill="#323232"/><rect x="168" y="2" width="1135" height="52" fill="#393939"/><rect x="168" y="54" width="1135" height="2" fill="#2b2b2b"/><rect x="0" y="50" width="168" height="6" fill="#4769a8"/><rect x="18" y="14" width="28" height="6" fill="#abaaaf"/><rect x="18" y="36" width="28" height="6" fill="#abaaaf"/><path d="M20,25.5 L25,20.6 L29.8,25.5 Z M34.1,25.5 L39,20.6 L43.9,25.5 Z" fill="#5d89d2"/><rect x="24" y="25" width="2.2" height="11" fill="#5d89d2"/><rect x="38" y="25" width="2.1" height="3" fill="#5d89d2"/><rect x="38" y="30.2" width="2.1" height="1.8" fill="#5d89d2"/><rect x="38" y="34.1" width="2.1" height="1.8" fill="#5d89d2"/><text x="56" y="35.6" font-size="22" textLength="64.5" lengthAdjust="spacing" fill="#c9c9c9">public</text><path d="M137,21 L151,35 M151,21 L137,35" stroke="#b4b4b4" stroke-width="2"/><rect x="0" y="56" width="1303" height="52" fill="#393939"/><rect x="0" y="108" width="1303" height="2" fill="#2b2b2b"/><rect x="4" y="60" width="44" height="44" rx="7" fill="#252525"/><rect x="56" y="60" width="44" height="44" rx="7" fill="#252525"/><rect x="108" y="60" width="44" height="44" rx="7" fill="#252525"/><rect x="160" y="60" width="44" height="44" rx="7" fill="#252525"/><rect x="12" y="70" width="10" height="24" fill="#abaaaf"/><rect x="24" y="70" width="16" height="5" fill="#abaaaf"/><rect x="24" y="79" width="6" height="2.2" fill="#abaaaf"/><rect x="24" y="85" width="6" height="2.2" fill="#abaaaf"/><rect x="24" y="91" width="6" height="2.2" fill="#abaaaf"/><circle cx="36" cy="82" r="7.2" fill="#252525"/><rect x="32" y="84" width="11" height="15" fill="#252525"/><circle cx="36" cy="82" r="3.9" fill="none" stroke="#e3b500" stroke-width="4.4"/><rect x="34" y="86" width="4.4" height="12.5" fill="#e3b500"/><rect x="38" y="92" width="4.2" height="4.5" fill="#e3b500"/><rect x="64" y="70" width="10" height="24" fill="#8e8e93"/><rect x="76" y="70" width="16" height="24" fill="#abaaaf"/><rect x="76" y="76" width="5.8" height="3.4" fill="#252525"/><rect x="84.3" y="76" width="5.6" height="3.4" fill="#252525"/><rect x="76" y="82" width="5.8" height="3.4" fill="#252525"/><rect x="84.3" y="82" width="5.6" height="3.4" fill="#252525"/><rect x="76" y="88" width="5.8" height="3.4" fill="#252525"/><rect x="84.3" y="88" width="5.6" height="3.4" fill="#252525"/><circle cx="128.4" cy="75.7" r="5.4" fill="none" stroke="#5d89d2" stroke-width="5.2"/><rect x="126" y="80" width="5.2" height="16" fill="#5d89d2"/><rect x="131" y="88" width="5" height="5" fill="#5d89d2"/><path d="M173,70 H193 Q196,70 196,73 V96 L187.5,90 H173 Q170,90 170,87 V73 Q170,70 173,70 Z" fill="#abaaaf"/><rect x="214" y="62" width="2" height="40" fill="#2c2c2c"/><rect x="436" y="62" width="2" height="40" fill="#2c2c2c"/><rect x="554" y="62" width="2" height="40" fill="#2c2c2c"/><circle cx="248" cy="82" r="12.6" fill="none" stroke="#abaaaf" stroke-width="2.6"/><rect x="240" y="80" width="16" height="4.2" fill="#abaaaf"/><rect x="245.9" y="74" width="4.2" height="16" fill="#abaaaf"/><circle cx="300" cy="82" r="12.6" fill="none" stroke="#abaaaf" stroke-width="2.6"/><rect x="292" y="80" width="16" height="4.2" fill="#abaaaf"/><path d="M339.7,74 H346 V90 H341.8 V78 H339.7 Z" fill="#abaaaf"/><rect x="350" y="76.3" width="4" height="3.7" fill="#abaaaf"/><rect x="350" y="84" width="4" height="3.8" fill="#abaaaf"/><path d="M355.7,74 H362 V90 H357.8 V78 H355.7 Z" fill="#abaaaf"/><rect x="391.6" y="71.6" width="24.8" height="20.8" fill="none" stroke="#abaaaf" stroke-width="3.2"/><path d="M396,76 H402 V78 H398 V82 H396 Z" fill="#abaaaf"/><path d="M412,82 V88 H406 V86 H410 V82 Z" fill="#abaaaf"/><rect x="455.8" y="78" width="12" height="6" fill="#abaaaf"/><rect x="470" y="68" width="12" height="6" fill="#abaaaf"/><rect x="470" y="88" width="12" height="6" fill="#abaaaf"/><path d="M462,80 L471,71 M462,82 L471,91" stroke="#abaaaf" stroke-width="2.2"/><rect x="511.8" y="82" width="9" height="2.3" fill="#abaaaf"/><path d="M520,77.8 L525.8,83 L520,88 Z" fill="#abaaaf"/><rect x="528" y="74" width="6" height="6" fill="#abaaaf"/><path d="M576,68 H594 V72 H580 V88 H576 Z" fill="#abaaaf"/><rect x="582" y="74" width="18" height="20" fill="#abaaaf"/><rect x="586" y="78" width="10" height="2" fill="#393939"/><rect x="586" y="82" width="10" height="2" fill="#393939"/><rect x="586" y="86" width="10" height="2" fill="#393939"/><rect x="628" y="72" width="22" height="4" fill="#abaaaf"/><rect x="628" y="80" width="12" height="4" fill="#abaaaf"/><rect x="628" y="88" width="12" height="4" fill="#abaaaf"/><rect x="644" y="80" width="10" height="2" fill="#abaaaf"/><rect x="648" y="81" width="2" height="14" fill="#abaaaf"/><rect x="644" y="94" width="10" height="2" fill="#abaaaf"/><path d="M680,74 H684 V90 H700 V94 H680 Z" fill="#abaaaf"/><path d="M689.5,84.5 L699,75" stroke="#abaaaf" stroke-width="4"/><path d="M692.7,70 H704 V81.8 Z" fill="#abaaaf"/><rect x="736" y="70" width="16" height="6" fill="#abaaaf"/><path d="M732,77.7 H756 Q758,77.7 758,79.7 V88 H730 V79.7 Q730,77.7 732,77.7 Z" fill="#abaaaf"/><rect x="753.8" y="80" width="1.8" height="1.8" fill="#393939"/><rect x="737" y="88" width="14" height="7" fill="none" stroke="#abaaaf" stroke-width="2"/><path d="M784,70 H808 V94.3 H784 Z M788,74 V82 H804 V74 Z" fill="#abaaaf" fill-rule="evenodd"/><rect x="790" y="88" width="12" height="6.3" fill="#393939"/><rect x="792" y="90" width="8" height="4.3" fill="#abaaaf"/></svg></body></html>
